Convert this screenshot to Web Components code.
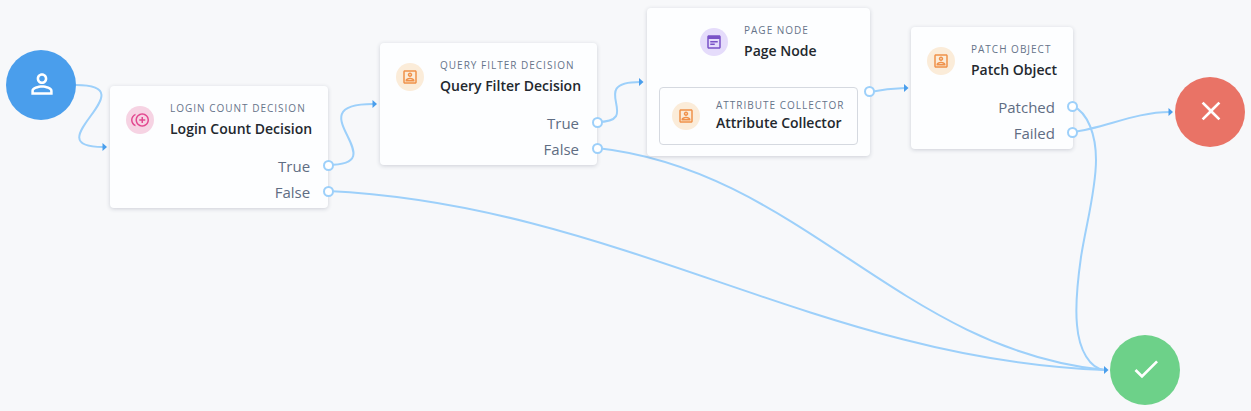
<!DOCTYPE html>
<html>
<head>
<meta charset="utf-8">
<title>Journey</title>
<style>
  html,body{margin:0;height:100%;background:#f7f8fa;font-family:"Open Sans",sans-serif}
  flow-canvas{width:1251px;height:411px}
</style>
</head>
<body>
<flow-canvas>
  <flow-terminal kind="start" style="left:6px;top:50px"></flow-terminal>
  <flow-terminal kind="failure" style="left:1175px;top:77px"></flow-terminal>
  <flow-terminal kind="success" style="left:1110px;top:335px"></flow-terminal>

  <flow-node style="left:110px;top:86px">
    <node-head icon="count" label="LOGIN COUNT DECISION" name="Login Count Decision"></node-head>
    <node-outcome>True</node-outcome>
    <node-outcome>False</node-outcome>
  </flow-node>

  <flow-node style="left:380px;top:43px">
    <node-head icon="portrait" label="QUERY FILTER DECISION" name="Query Filter Decision"></node-head>
    <node-outcome>True</node-outcome>
    <node-outcome>False</node-outcome>
  </flow-node>

  <flow-node page style="left:647px;top:8px">
    <node-head icon="page" label="PAGE NODE" name="Page Node" center></node-head>
    <node-head icon="portrait" label="ATTRIBUTE COLLECTOR" name="Attribute Collector" inner></node-head>
  </flow-node>

  <flow-node style="left:911px;top:27px">
    <node-head icon="portrait" label="PATCH OBJECT" name="Patch Object"></node-head>
    <node-outcome>Patched</node-outcome>
    <node-outcome>Failed</node-outcome>
  </flow-node>
</flow-canvas>

<script>
const ICONS={
  person:'M12 5.9c1.16 0 2.1.94 2.1 2.1s-.94 2.1-2.1 2.1S9.9 9.16 9.9 8s.94-2.1 2.1-2.1m0 9c2.97 0 6.1 1.46 6.1 2.1v1.1H5.9V17c0-.64 3.13-2.1 6.1-2.1M12 4C9.79 4 8 5.79 8 8s1.79 4 4 4 4-1.79 4-4-1.79-4-4-4zm0 9c-2.67 0-8 1.34-8 4v3h16v-3c0-2.66-5.33-4-8-4z',
  close:'M19 6.41L17.59 5 12 10.59 6.41 5 5 6.41 10.59 12 5 17.59 6.41 19 12 13.41 17.59 19 19 17.59 13.41 12z',
  check:'M9 16.17L4.83 12l-1.42 1.41L9 19 21 7l-1.41-1.41z',
  count:'M16 8h-2v3h-3v2h3v3h2v-3h3v-2h-3zM2 12c0-2.79 1.64-5.2 4.01-6.32V3.52C2.52 4.76 0 8.09 0 12s2.52 7.24 6.01 8.48v-2.16C3.64 17.2 2 14.79 2 12zm13-9c-4.96 0-9 4.04-9 9s4.04 9 9 9 9-4.04 9-9-4.04-9-9-9zm0 16c-3.86 0-7-3.14-7-7s3.14-7 7-7 7 3.14 7 7-3.14 7-7 7z',
  portrait:'M12 12c1.65 0 3-1.35 3-3s-1.35-3-3-3-3 1.35-3 3 1.35 3 3 3zm0-4c.55 0 1 .45 1 1s-.45 1-1 1-1-.45-1-1 .45-1 1-1zm6 8.58c0-2.5-3.97-3.58-6-3.58s-6 1.08-6 3.58V18h12v-1.42zM8.48 16c.74-.51 2.23-1 3.52-1s2.78.49 3.52 1H8.48zM19 3H5c-1.1 0-2 .9-2 2v14c0 1.1.9 2 2 2h14c1.1 0 2-.9 2-2V5c0-1.1-.9-2-2-2zm0 16H5V5h14v14z',
  page:'M19 3H5c-1.1 0-2 .9-2 2v14c0 1.1.9 2 2 2h14c1.1 0 2-.9 2-2V5c0-1.1-.9-2-2-2zm0 16H5V8h14v11zM7 10.5h10v2H7zM7 14h6v2H7z'
};
const ICON_COLORS={
  count:['#f6d3e3','#e2478f'],
  portrait:['#fbecd9','#f0914a'],
  page:['#e5dcfb','#7a52c7']
};
const svgIcon=(name,size,color)=>`<svg width="${size}" height="${size}" viewBox="0 0 24 24" fill="${color}"><path d="${ICONS[name]}"/></svg>`;

// edges sit under the nodes, drawn from port to arrow tip
const EDGES=[
  'M76 85C150 85 32 147 103 147',
  'M328 165C398 165 293 104 373 104',
  'M597 122C645 122 585 82 640 82',
  'M870 92C880 90 890 88.5 905 88',
  'M1073 132C1105 128 1135 112 1170 112',
  'M1073 106C1088 113 1096 135 1096 160C1096 190 1086 225 1081 257C1077 285 1075 305 1077 325C1079 350 1090 369 1105 370',
  'M597 148C800 170 900 350 1105 370',
  'M328 191C620 205 820 360 1105 370'
];
const ARROWS=[[103,147],[373,104],[639.5,82],[904.5,88],[1169,112],[1104.5,370]];

class FlowCanvas extends HTMLElement{
  constructor(){
    super(); this.attachShadow({mode:'open'});
    this.shadowRoot.innerHTML=`
      <style>
        :host{display:block;position:relative;overflow:hidden}
        svg{position:absolute;left:0;top:0}
        path{fill:none;stroke:#9dd0fa;stroke-width:2}
        polygon{fill:#4a9eec}
      </style>
      <svg width="1251" height="411">
        ${EDGES.map(d=>`<path d="${d}"/>`).join('')}
        ${ARROWS.map(([x,y])=>`<polygon points="${x-.5},${y-4} ${x+4},${y} ${x-.5},${y+4}"/>`).join('')}
      </svg>
      <slot></slot>`;
  }
}
customElements.define('flow-canvas',FlowCanvas);

class FlowTerminal extends HTMLElement{
  constructor(){
    super(); this.attachShadow({mode:'open'});
    const k=this.getAttribute('kind');
    const [bg,icon]={start:['#4a9eec','person'],failure:['#e97366','close'],success:['#6dd189','check']}[k];
    this.shadowRoot.innerHTML=`
      <style>
        :host{position:absolute;display:flex;align-items:center;justify-content:center;width:70px;height:70px;border-radius:50%;background:${bg}}
        svg{display:block;margin:0 0 2px 2px}
      </style>${svgIcon(icon,32,'#fff')}`;
  }
}
customElements.define('flow-terminal',FlowTerminal);

class FlowNode extends HTMLElement{
  constructor(){
    super(); this.attachShadow({mode:'open'});
    const page=this.hasAttribute('page');
    this.shadowRoot.innerHTML=`
      <style>
        :host{position:absolute;display:flex;flex-direction:column;box-sizing:border-box;padding:${page?'20px 12px 11px':'20px 0 2px'};
          background:#fdfeff;border-radius:4px;box-shadow:0 1px 4px rgba(40,50,80,.2)}
      </style>
      <slot></slot>
      ${page?'<node-port style="top:78px"></node-port>':''}`;
  }
}
customElements.define('flow-node',FlowNode);

class NodeHead extends HTMLElement{
  constructor(){
    super(); this.attachShadow({mode:'open'});
    const [bg,fg]=ICON_COLORS[this.getAttribute('icon')];
    const inner=this.hasAttribute('inner'), center=this.hasAttribute('center');
    this.shadowRoot.innerHTML=`
      <style>
        :host{display:flex;gap:16px;align-items:${inner?'center':'flex-start'};
          ${inner?'box-sizing:border-box;height:58px;margin-top:26px;padding:0 12px;border:1px solid #d5d9e0;border-radius:4px;':center?'justify-content:center;':'padding:0 16px 15px;'}}
        .badge{flex:none;display:flex;align-items:center;justify-content:center;width:28px;height:28px;border-radius:50%;background:${bg}}
        .text{margin-top:${inner?'0':'-4px'};white-space:nowrap}
        .label{font-size:10px;line-height:12px;letter-spacing:1px;color:#66748a}
        .name{font-size:14px;line-height:20px;font-weight:600;color:#23282e;margin-top:${inner?'2px':'5px'}}
      </style>
      <div class="badge">${svgIcon(this.getAttribute('icon'),18,fg)}</div>
      <div class="text">
        <div class="label">${this.getAttribute('label')}</div>
        <div class="name">${this.getAttribute('name')}</div>
      </div>`;
  }
}
customElements.define('node-head',NodeHead);

class NodeOutcome extends HTMLElement{
  constructor(){
    super(); this.attachShadow({mode:'open'});
    this.shadowRoot.innerHTML=`
      <style>
        :host{display:block;position:relative;height:26px;line-height:24px;padding-right:18px;text-align:right;font-size:15px;color:#5f6d83}
        node-port{top:5.5px}
      </style>
      <slot></slot><node-port></node-port>`;
  }
}
customElements.define('node-outcome',NodeOutcome);

class NodePort extends HTMLElement{
  constructor(){
    super(); this.attachShadow({mode:'open'});
    this.shadowRoot.innerHTML=`
      <style>
        :host{position:absolute;right:-5.5px;width:11px;height:11px;box-sizing:border-box;border:2px solid #9dd0fa;border-radius:50%;background:#fff}
      </style>`;
  }
}
customElements.define('node-port',NodePort);
</script>
</body>
</html>
